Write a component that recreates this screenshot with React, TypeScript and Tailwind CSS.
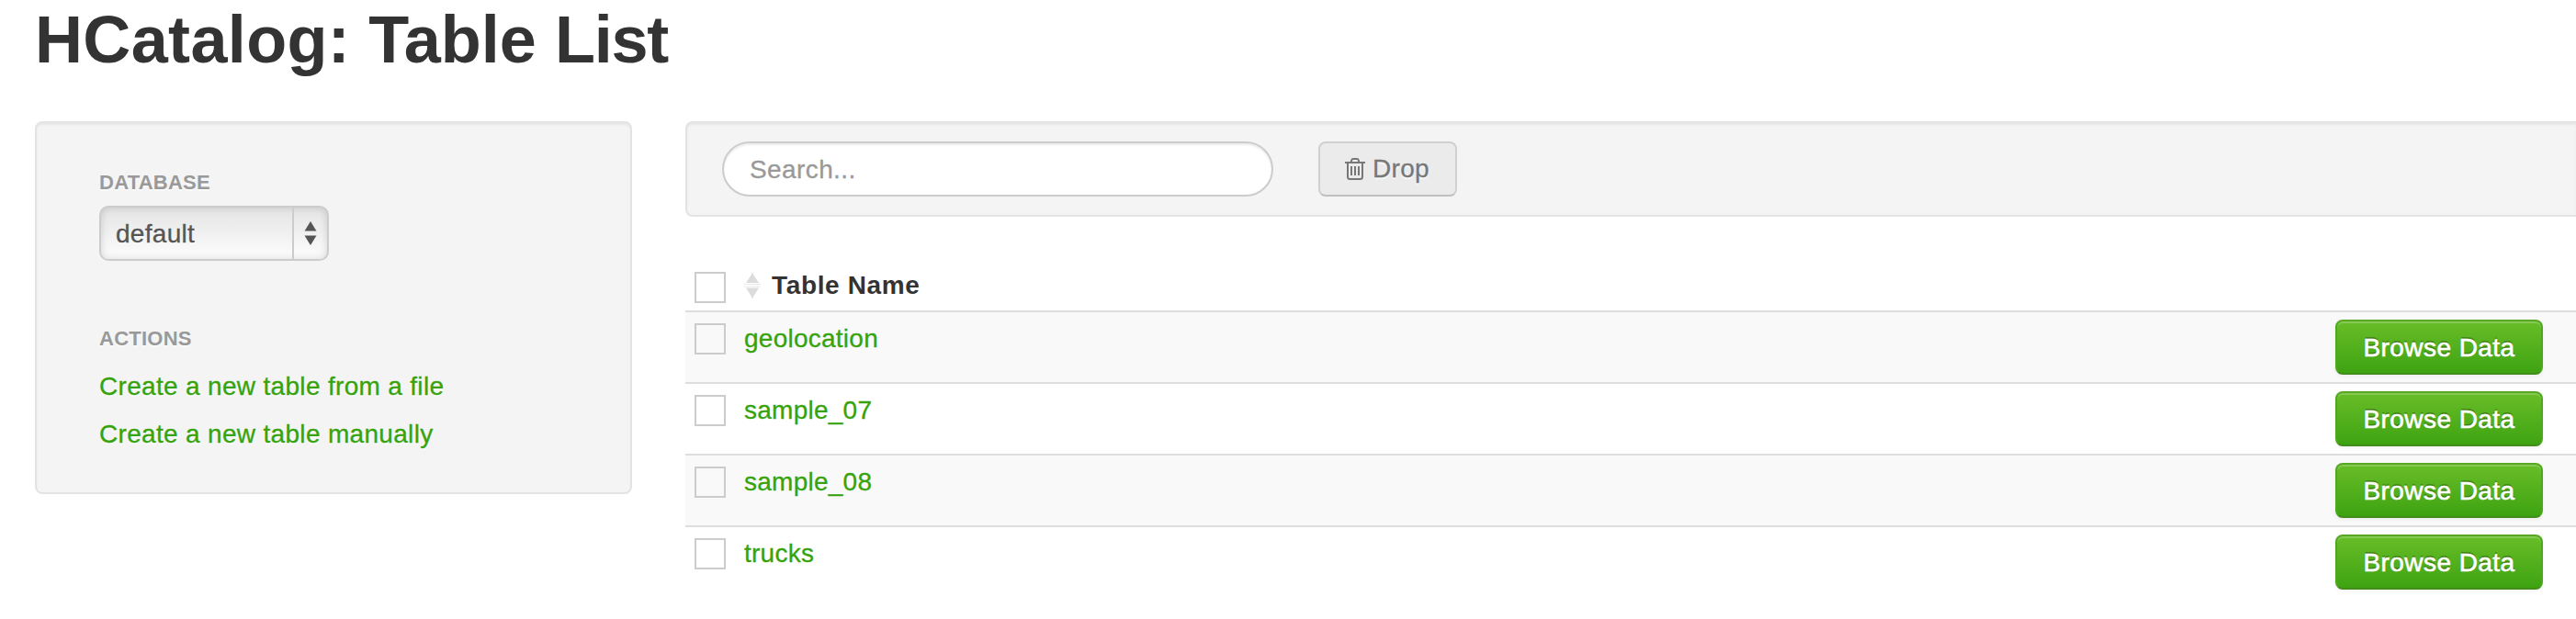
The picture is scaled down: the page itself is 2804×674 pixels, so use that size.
const rows = ['geolocation', 'sample_07', 'sample_08', 'trucks'];

function TrashIcon() {
  return (
    <svg className="block h-6 w-[22px] shrink-0" viewBox="0 0 22 24" fill="none" stroke="#777777" strokeWidth="2">
      <path d="M0 5H22" />
      <path d="M6.5 5L7.2 2.4Q7.6 1 9 1H13Q14.4 1 14.8 2.4L15.5 5" />
      <path d="M3 5V20.5Q3 23 5.5 23H16.5Q19 23 19 20.5V5" />
      <path d="M7 9V19M11 9V19M15 9V19" />
    </svg>
  );
}

function SortIcon() {
  return (
    <svg className="block h-[30px] w-[18px] shrink-0" viewBox="0 0 18 30" fill="#dcdcdc">
      <path d="M9 0L10 3L16 12H2L8 3Z" />
      <path d="M2 17.5H16L10 27L9 30L8 27L2 17.5Z" />
      <path d="M0 13H18V14H0ZM0 15.5H18V16.5H0Z" opacity=".6" />
    </svg>
  );
}

function Checkbox() {
  return <span className="block size-[34px] shrink-0 border-2 border-[#cccccc]" />;
}

export default function App() {
  return (
    <div className="h-[674px] w-full overflow-hidden bg-white pl-[38px] font-['Liberation_Sans',Arial,sans-serif] text-[28px] leading-[40px] text-[#333333]">
      <h1 className="flex h-[132px] items-start gap-5 pt-[3px] text-[72px] font-bold leading-[80px] whitespace-nowrap">
        <span className="tracking-[0.35px]">HCatalog:</span>
        <span>Table</span>
        <span className="tracking-[-1.2px]">List</span>
      </h1>
      <div className="flex items-start gap-[58px]">
        <aside className="h-[406px] w-[650px] shrink-0 rounded-lg border-2 border-[#e3e3e3] bg-[#f4f4f4] pt-[44px] pl-[68px] shadow-[inset_0_2px_2px_rgba(0,0,0,0.05)] [text-shadow:0_2px_0_rgba(255,255,255,0.5)]">
          <h2 className="h-[46px] text-[22px] font-bold leading-[41px] tracking-[0.25px] text-[#999999]">DATABASE</h2>
          <div className="flex h-[60px] w-[250px] rounded-[10px] border-2 border-[#cccccc] bg-linear-to-b from-[#e4e4e4] to-[#fdfdfd] tracking-[0.3px] text-[#555555] shadow-[inset_0_0_8px_rgba(0,0,0,0.15)] [-webkit-text-stroke:0.3px_#555555]">
            <span className="w-[210px] border-r-2 border-[#cccccc] pl-4 leading-[57px]">default</span>
            <svg className="mt-[15px] ml-[11px] h-[26px] w-[14px]" viewBox="0 0 14 26" fill="#555555">
              <path d="M7 0L13.5 10.5H.5Z" />
              <path d="M.5 15.5H13.5L7 26Z" />
            </svg>
          </div>
          <h2 className="mt-[64px] text-[22px] font-bold leading-[41px] tracking-[0.25px] text-[#999999]">ACTIONS</h2>
          <nav className="mt-[6px] flex flex-col tracking-[0.32px] text-[#36a30c] [-webkit-text-stroke:0.3px_#36a30c]">
            <a className="h-[52px] leading-[52px]">Create a new table from a file</a>
            <a className="h-[52px] leading-[52px]">Create a new table manually</a>
          </nav>
        </aside>
        <main className="min-w-0 flex-1">
          <div className="flex h-[104px] items-center rounded-l-lg border-2 border-r-0 border-[#e3e3e3] bg-[#f4f4f4] pl-[38px] shadow-[inset_0_2px_2px_rgba(0,0,0,0.05)]">
            <div className="h-[60px] w-[600px] rounded-full border-2 border-[#cccccc] bg-white pl-7 leading-[57px] tracking-[0.4px] text-[#999999] shadow-[inset_0_2px_2px_rgba(0,0,0,0.075)] [-webkit-text-stroke:0.3px_#999999]">Search...</div>
            <button className="ml-[49px] flex h-[60px] w-[151px] items-center gap-2 rounded-lg border-2 border-[#d0d0d0] border-b-[#bfbfbf] bg-[#ebebeb] pl-[27px] text-[#777777] [-webkit-text-stroke:0.3px_#777777] [text-shadow:0_2px_2px_rgba(255,255,255,0.75)]">
              <TrashIcon />
              <span className="tracking-[0.3px]">Drop</span>
            </button>
          </div>
          <div className="mt-[60px] flex h-[42px] items-start pl-[10px] font-bold">
            <Checkbox />
            <div className="ml-5 flex items-start gap-3">
              <SortIcon />
              <span className="-mt-[5px] tracking-[0.65px]">Table Name</span>
            </div>
          </div>
          {rows.map((name) => (
            <div key={name} className="flex h-[78px] items-start border-t-2 border-[#dddddd] bg-white pr-9 pl-[10px] nth-[3]:bg-[#f9f9f9] nth-[5]:bg-[#f9f9f9]">
              <span className="pt-3"><Checkbox /></span>
              <a className="ml-5 flex-1 pt-[9px] tracking-[0.25px] text-[#36a30c] [-webkit-text-stroke:0.3px_#36a30c]">{name}</a>
              <button className="mt-2 h-[60px] w-[226px] rounded-lg border-2 border-[#58a823] border-x-[#4da81e] border-b-[#438d1c] bg-linear-to-b from-[#69be28] to-[#3ca210] bg-origin-border pt-px tracking-[0.45px] text-white shadow-[inset_0_2px_0_rgba(255,255,255,0.2),0_2px_4px_rgba(0,0,0,0.05)] [-webkit-text-stroke:0.6px_#ffffff] [text-shadow:0_-2px_0_rgba(0,0,0,0.25)]">Browse Data</button>
            </div>
          ))}
        </main>
      </div>
    </div>
  );
}
